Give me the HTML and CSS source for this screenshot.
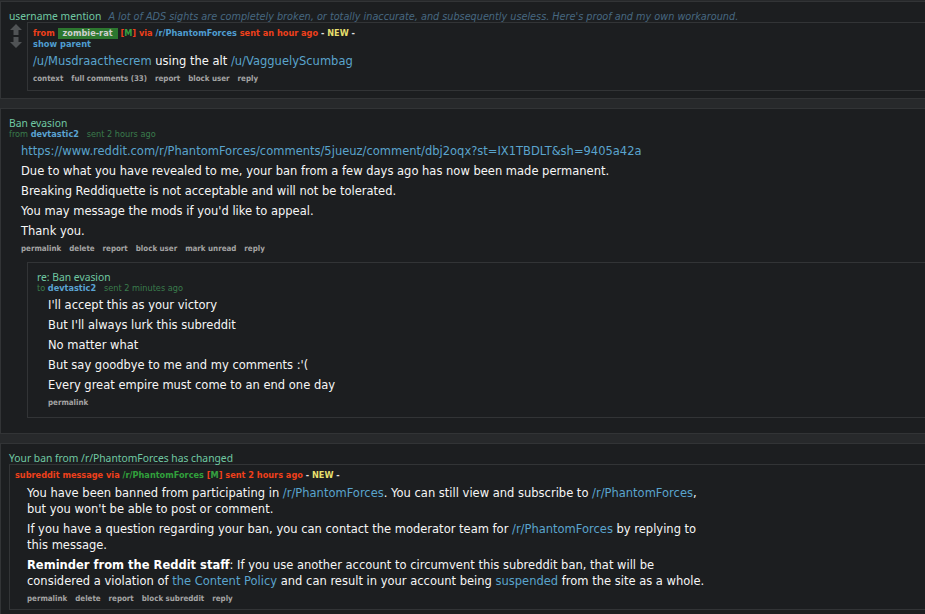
FILE: index.html
```html
<!DOCTYPE html>
<html>
<head>
<meta charset="utf-8">
<link rel="stylesheet" href="styles.css">
</head>
<body>
<div class="page">

  <div class="message">
    <div class="subject-row">
      <span class="subject">username mention</span>
      <span class="subject-link">A lot of ADS sights are completely broken, or totally inaccurate, and subsequently useless. Here's proof and my own workaround.</span>
    </div>
    <div class="thing">
      <div class="midcol">
        <svg class="arrow" width="12" height="11" viewBox="0 0 12 11"><path d="M6 0 L12 6 L8.5 6 L8.5 11 L3.5 11 L3.5 6 L0 6 Z" fill="#505355"/></svg>
        <svg class="arrow" width="12" height="11" viewBox="0 0 12 11"><path d="M6 11 L12 5 L8.5 5 L8.5 0 L3.5 0 L3.5 5 L0 5 Z" fill="#505355"/></svg>
      </div>
      <div class="entry boxed">
        <p class="tagline bold">
          <span class="red">from</span>
          <span class="flair">zombie-rat</span>
          <span class="red">[</span><span class="green">M</span><span class="red">]</span>
          <span class="red">via</span> <a class="blue">/r/PhantomForces</a>
          <span class="red">sent an hour ago</span> <span class="dash">-</span> <span class="new">NEW</span> <span class="dash">-</span>
        </p>
        <p class="showparent">show parent</p>
        <div class="md">
          <p><a class="link">/u/Musdraacthecrem</a> using the alt <a class="link">/u/VagguelyScumbag</a></p>
        </div>
        <ul class="buttons">
          <li>context</li><li>full comments (33)</li><li>report</li><li>block user</li><li>reply</li>
        </ul>
      </div>
    </div>
  </div>

  <div class="message">
    <p class="subject">Ban evasion</p>
    <p class="tagline small">
      <span class="dgreen">from</span> <a class="author">devtastic2</a>&nbsp;&nbsp; <span class="dgreen">sent 2 hours ago</span>
    </p>
    <div class="body-indent">
      <div class="md">
        <p><a class="link">https://www.reddit.com/r/PhantomForces/comments/5jueuz/comment/dbj2oqx?st=IX1TBDLT&amp;sh=9405a42a</a></p>
        <p>Due to what you have revealed to me, your ban from a few days ago has now been made permanent.</p>
        <p>Breaking Reddiquette is not acceptable and will not be tolerated.</p>
        <p>You may message the mods if you'd like to appeal.</p>
        <p>Thank you.</p>
      </div>
      <ul class="buttons">
        <li>permalink</li><li>delete</li><li>report</li><li>block user</li><li>mark unread</li><li>reply</li>
      </ul>
    </div>

    <div class="child boxed">
      <p class="subject">re: Ban evasion</p>
      <p class="tagline small">
        <span class="dgreen">to</span> <a class="author">devtastic2</a>&nbsp;&nbsp; <span class="dgreen">sent 2 minutes ago</span>
      </p>
      <div class="body-indent">
        <div class="md">
          <p>I'll accept this as your victory</p>
          <p>But I'll always lurk this subreddit</p>
          <p>No matter what</p>
          <p>But say goodbye to me and my comments :'(</p>
          <p>Every great empire must come to an end one day</p>
        </div>
        <ul class="buttons">
          <li>permalink</li>
        </ul>
      </div>
    </div>
  </div>

  <div class="message">
    <p class="subject">Your ban from /r/PhantomForces has changed</p>
    <div class="entry boxed modmail">
      <p class="tagline bold">
        <span class="red">subreddit message via</span> <a class="sub-green">/r/PhantomForces</a>
        <span class="red">[</span><span class="green">M</span><span class="red">]</span>
        <span class="red">sent 2 hours ago</span> <span class="dash">-</span> <span class="new">NEW</span> <span class="dash">-</span>
      </p>
      <div class="body-indent">
        <div class="md md-modmail">
          <p>You have been banned from participating in <a class="link">/r/PhantomForces</a>. You can still view and subscribe to <a class="link">/r/PhantomForces</a>, but you won't be able to post or comment.</p>
          <p>If you have a question regarding your ban, you can contact the moderator team for <a class="link">/r/PhantomForces</a> by replying to this message.</p>
          <p><strong>Reminder from the Reddit staff</strong>: If you use another account to circumvent this subreddit ban, that will be considered a violation of <a class="link">the Content Policy</a> and can result in your account being <a class="link">suspended</a> from the site as a whole.</p>
        </div>
        <ul class="buttons">
          <li>permalink</li><li>delete</li><li>report</li><li>block subreddit</li><li>reply</li>
        </ul>
      </div>
    </div>
  </div>

</div>
</body>
</html>
```

FILE: styles.css
```css
* { box-sizing: border-box; }

html, body {
  margin: 0;
  padding: 0;
  background: #27292b;
}

body {
  font-family: "DejaVu Sans", Verdana, sans-serif;
  color: #e6e6e6;
  overflow: hidden;
}

p { margin: 0; }
a { text-decoration: none; }

.page {
  padding-top: 1px;
  width: 960px;
}

.message {
  background: #1c1e20;
  border: 1px solid #323436;
  margin-bottom: 9px;
  padding: 8px 0 7px 8px;
}

.subject-row {
  display: flex;
  align-items: baseline;
  gap: 7px;
  height: 12px;
  line-height: 12px;
}

.subject {
  font-family: "Noto Sans", "DejaVu Sans", sans-serif;
  font-size: 10.3px;
  line-height: 12px;
  color: #70c9a3;
  white-space: nowrap;
}

.subject-link {
  font-family: "DejaVu Sans", sans-serif;
  font-style: italic;
  font-size: 9.7px;
  color: #476880;
  white-space: nowrap;
}

.thing {
  display: flex;
}

.midcol {
  width: 18px;
  padding: 2px 0 0 1px;
  display: flex;
  flex-direction: column;
  gap: 2px;
}

.arrow { display: block; }

.boxed {
  border-top: 1px solid #323436;
  border-left: 1px solid #323436;
  border-bottom: 1px solid #323436;
}

.entry {
  flex: 1;
  padding: 5px 0 5px 5px;
}

.tagline,
.showparent,
.buttons {
  font-family: "DejaVu Sans Condensed", "DejaVu Sans", sans-serif;
  font-stretch: condensed;
}

.tagline {
  font-size: 9.1px;
  line-height: 11px;
  white-space: nowrap;
}

.tagline.bold { font-size: 9.1px; font-weight: bold; }

.tagline.small { line-height: 10px; }

.red { color: #ef401b; }
.green { color: #36a040; }
.dgreen { color: #3a7c4c; }
.blue { color: #4f9dd0; }
.sub-green { color: #31a13c; }
.dash { color: #e0e0e0; }
.new { color: #e5df6d; }

.flair {
  display: inline-block;
  background: #2c772f;
  color: #d0d0d0;
  padding: 0 5px;
  line-height: 11px;
}

.author {
  color: #5aa3d2;
  font-weight: bold;
}

.showparent {
  font-size: 9.2px;
  font-weight: bold;
  line-height: 10px;
  color: #4f9dd0;
}

.md {
  font-size: 11.5px;
  line-height: 16px;
  color: #f6f6f6;
  margin-top: 4px;
}

.md-modmail { max-width: 680px; }

.md p { margin-bottom: 4px; }

.md strong { font-weight: bold; color: #ffffff; }

.link { color: #5aa4cd; }

.body-indent {
  padding-left: 12px;
}

.buttons {
  list-style: none;
  margin: 0;
  padding: 0;
  display: flex;
  gap: 8px;
  font-size: 7.9px;
  font-weight: bold;
  line-height: 12px;
  color: #a3a3a3;
}

.child {
  margin-top: 7px;
  margin-left: 18px;
  margin-bottom: 8px;
  padding: 8px 0 8px 9px;
}

.child .body-indent { padding-left: 11px; }

.modmail {
  padding: 5px 0 4px 5px;
}
```
